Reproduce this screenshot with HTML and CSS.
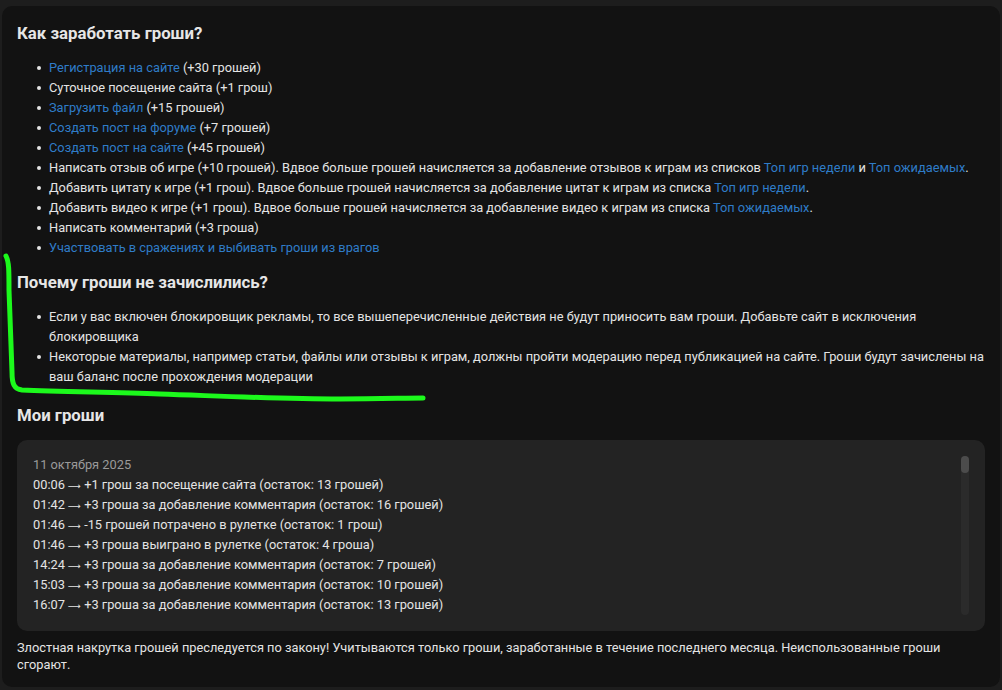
FILE: index.html
```html
<!DOCTYPE html>
<html lang="ru">
<head>
<meta charset="utf-8">
<link rel="stylesheet" href="styles.css">
</head>
<body>
<div class="page">
  <div class="card">
    <h2 class="title">Как заработать гроши?</h2>
    <ul class="list">
      <li><a href="#">Регистрация на сайте</a> (+30 грошей)</li>
      <li>Суточное посещение сайта (+1 грош)</li>
      <li><a href="#">Загрузить файл</a> (+15 грошей)</li>
      <li><a href="#">Создать пост на форуме</a> (+7 грошей)</li>
      <li><a href="#">Создать пост на сайте</a> (+45 грошей)</li>
      <li>Написать отзыв об игре (+10 грошей). Вдвое больше грошей начисляется за добавление отзывов к играм из списков <a href="#">Топ игр недели</a> и <a href="#">Топ ожидаемых</a>.</li>
      <li>Добавить цитату к игре (+1 грош). Вдвое больше грошей начисляется за добавление цитат к играм из списка <a href="#">Топ игр недели</a>.</li>
      <li>Добавить видео к игре (+1 грош). Вдвое больше грошей начисляется за добавление видео к играм из списка <a href="#">Топ ожидаемых</a>.</li>
      <li>Написать комментарий (+3 гроша)</li>
      <li><a href="#">Участвовать в сражениях и выбивать гроши из врагов</a></li>
    </ul>
    <h2 class="title">Почему гроши не зачислились?</h2>
    <ul class="list">
      <li>Если у вас включен блокировщик рекламы, то все вышеперечисленные действия не будут приносить вам гроши. Добавьте сайт в исключения блокировщика</li>
      <li>Некоторые материалы, например статьи, файлы или отзывы к играм, должны пройти модерацию перед публикацией на сайте. Гроши будут зачислены на ваш баланс после прохождения модерации</li>
    </ul>
    <h2 class="title title-my">Мои гроши</h2>
    <div class="log">
      <div class="log-entries">
        <div class="log-date">11 октября 2025</div>
        <div>00:06 <span class="arrow">⟶</span> +1 грош за посещение сайта (остаток: 13 грошей)</div>
        <div>01:42 <span class="arrow">⟶</span> +3 гроша за добавление комментария (остаток: 16 грошей)</div>
        <div>01:46 <span class="arrow">⟶</span> -15 грошей потрачено в рулетке (остаток: 1 грош)</div>
        <div>01:46 <span class="arrow">⟶</span> +3 гроша выиграно в рулетке (остаток: 4 гроша)</div>
        <div>14:24 <span class="arrow">⟶</span> +3 гроша за добавление комментария (остаток: 7 грошей)</div>
        <div>15:03 <span class="arrow">⟶</span> +3 гроша за добавление комментария (остаток: 10 грошей)</div>
        <div>16:07 <span class="arrow">⟶</span> +3 гроша за добавление комментария (остаток: 13 грошей)</div>
      </div>
      <div class="scrollbar"><div class="thumb"></div></div>
    </div>
    <p class="note">Злостная накрутка грошей преследуется по закону! Учитываются только гроши, заработанные в течение последнего месяца. Неиспользованные гроши сгорают.</p>
  </div>
  <svg class="scribble" width="1002" height="690" viewBox="0 0 1002 690">
    <path d="M6 256 C9 262 9 270 9 290 C10 320 11 350 12 372 C12 384 14 389 22 390 C60 392 110 392 160 394 C220 396 280 399 340 399 C380 399 405 398 423 398" fill="none" stroke="#1cf91c" stroke-width="5" stroke-linecap="round" stroke-linejoin="round"/>
  </svg>
</div>
</body>
</html>
```

FILE: styles.css
```css
html, body {
  margin: 0;
  padding: 0;
}
body {
  background: #1d1d1d;
  font-family: Roboto, "Noto Sans", "Liberation Sans", sans-serif;
  font-size: 12.8px;
  line-height: 20px;
  color: #e4e4e4;
}
.page {
  position: relative;
  width: 1002px;
  height: 690px;
  overflow: hidden;
  padding-top: 6px;
  box-sizing: border-box;
}
.card {
  margin-left: 2px;
  width: 998px;
  height: 681px;
  box-sizing: border-box;
  background: #121212;
  border-radius: 10px;
  padding: 17px 15px 15px 15px;
}
.title {
  margin: 0;
  font-size: 16.8px;
  line-height: 20px;
  font-weight: 700;
  color: #e6e6e6;
}
.list {
  margin: 15px 0 14px;
  padding-left: 32px;
  list-style: none;
}
.list li {
  position: relative;
  margin: 0;
}
.list li::before {
  content: "";
  position: absolute;
  left: -12px;
  top: 8px;
  width: 4px;
  height: 4px;
  border-radius: 50%;
  background: currentColor;
}
a {
  color: #2f7cc8;
  text-decoration: none;
}
.title-my {
  margin-top: 18px;
}
.log {
  margin-top: 15px;
  background: #232323;
  border-radius: 10px;
  padding: 15px 16px 16px 16px;
  display: flex;
  gap: 12px;
}
.log-entries {
  flex: 1;
}
.log-date {
  color: #9a9a9a;
}
.arrow {
  font-family: "DejaVu Sans", sans-serif;
  font-size: 9px;
  line-height: 0;
}
.scrollbar {
  width: 8px;
  margin-top: 1px;
  background: #2b2b2b;
  border-radius: 4px;
  display: flex;
  flex-direction: column;
}
.thumb {
  height: 17px;
  background: #4c4c4c;
  border-radius: 4px;
}
.note {
  margin: 8px 0 0;
  line-height: 17px;
}
.scribble {
  position: absolute;
  left: 0;
  top: 0;
  pointer-events: none;
}
```
